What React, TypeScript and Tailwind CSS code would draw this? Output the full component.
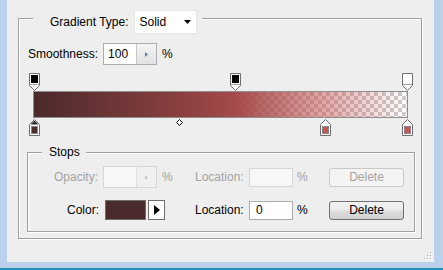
import React from 'react';

type OpacityStopData = { at: number; fill: string };
type ColorStopData = { at: number; color: string; selected?: boolean };

const opacityStops: OpacityStopData[] = [
  { at: 0, fill: '#000000' },
  { at: 54, fill: '#000000' },
  { at: 100, fill: '#ffffff' },
];

const colorStops: ColorStopData[] = [
  { at: 0, color: '#4b2a2b', selected: true },
  { at: 78, color: '#c95353' },
  { at: 100, color: '#c95353' },
];

// bar inner width in px per percent
const SCALE = 3.73;
const stopLeft = (at: number) => Math.round(at * SCALE) - 4;

function OpacityStop({ fill }: { fill: string }) {
  return (
    <svg width="11" height="18" viewBox="0 0 11 18">
      <path d="M0.5 0.5H10.5V12.5L5.5 17.5L0.5 12.5Z" fill="#ffffff" stroke="#6f6f6f" />
      <rect x="2" y="2" width="7" height="8" fill={fill} />
      <path d="M1 11.5H10" stroke="#a8a8a8" />
    </svg>
  );
}

function ColorStop({ color, selected }: { color: string; selected?: boolean }) {
  return (
    <svg width="11" height="17" viewBox="0 0 11 17">
      <path d="M5.5 0.5L10.5 5.5V16.5H0.5V5.5Z" fill="#ffffff" stroke="#6f6f6f" />
      {selected && <path d="M5.5 1.5L9.5 5.5H1.5Z" fill="#2e2e2e" />}
      <rect x="2.5" y="7.5" width="6" height="7" fill={color} stroke="#8a8a8a" />
    </svg>
  );
}

function SpinInput({ value, disabled }: { value?: string; disabled?: boolean }) {
  return (
    <div
      className={`flex w-[54px] h-[22px] border ${
        disabled ? 'border-[#d5d5d5] bg-[#f7f7f7]' : 'border-[#abadb3] bg-white'
      }`}
    >
      <div className="w-[32px] pl-[4px] leading-[20px]">{value}</div>
      <div
        className={`flex-1 flex items-center justify-center border-l ${
          disabled
            ? 'border-[#dedede] bg-[#f0f0f0]'
            : 'border-[#c6c6c6] bg-[linear-gradient(#f4f4f4,#e2e2e2)]'
        }`}
      >
        <svg width="3" height="5" viewBox="0 0 3 5">
          <path d="M0 0L3 2.5L0 5Z" fill={disabled ? '#c4c4c4' : '#5b7ea8'} />
        </svg>
      </div>
    </div>
  );
}

function DeleteButton({ disabled }: { disabled?: boolean }) {
  return (
    <div
      className={`w-[75px] h-[19px] rounded-[3px] border flex items-center justify-center leading-none ${
        disabled
          ? 'border-[#c9c9c9] bg-[#f4f4f4] text-[#a3a3a3]'
          : 'border-[#707070] bg-[linear-gradient(#f2f2f2,#ebebeb_45%,#dddddd_55%,#cfcfcf)]'
      }`}
    >
      Delete
    </div>
  );
}

function LocationField({ value, disabled }: { value?: string; disabled?: boolean }) {
  return (
    <>
      <span className={`w-[49px] ${disabled ? 'text-[#a3a3a3]' : ''}`}>Location:</span>
      <div
        className={`ml-[5px] w-[44px] h-[19px] border pl-[6px] leading-[17px] ${
          disabled ? 'border-[#d5d5d5] bg-[#f7f7f7]' : 'border-[#abadb3] bg-white'
        }`}
      >
        {value}
      </div>
      <span className={`ml-[4px] w-[32px] ${disabled ? 'text-[#a3a3a3]' : ''}`}>%</span>
      <DeleteButton disabled={disabled} />
    </>
  );
}

function GradientBar() {
  return (
    <div className="ml-[14px] mt-[8px] w-[375px]">
      {/* Opacity stops */}
      <div className="relative h-[18px]">
        {opacityStops.map((s) => (
          <div key={s.at} className="absolute top-0 flex" style={{ left: stopLeft(s.at) }}>
            <OpacityStop fill={s.fill} />
          </div>
        ))}
      </div>

      {/* Bar */}
      <div className="h-[27px] border border-[#8e8e8e] bg-[conic-gradient(#cccccc_25%,#ffffff_0_50%,#cccccc_0_75%,#ffffff_0)] bg-[length:8px_8px]">
        <div className="h-full w-full bg-[linear-gradient(to_right,#4b2a2b_0%,#8a3f40_39%,#a54a4b_54%,rgba(201,83,83,0.5)_78%,rgba(201,83,83,0)_100%)]" />
      </div>

      {/* Color stops */}
      <div className="relative h-[18px]">
        {colorStops.map((s) => (
          <div key={s.at} className="absolute top-[1px] flex" style={{ left: stopLeft(s.at) }}>
            <ColorStop color={s.color} selected={s.selected} />
          </div>
        ))}
        <div className="absolute top-[1px] left-[143px] flex">
          <svg width="7" height="7" viewBox="0 0 7 7">
            <path d="M3.5 0.5L6.5 3.5L3.5 6.5L0.5 3.5Z" fill="#ffffff" stroke="#000000" />
          </svg>
        </div>
      </div>
    </div>
  );
}

function StopsGroup() {
  return (
    <div className="ml-[8px] mt-[16px] w-[388px] h-[80px] flex flex-col items-start border border-[#a0a0a0] shadow-[1px_1px_0_#ffffff,inset_1px_1px_0_#ffffff]">
      <div className="-mt-[8px] ml-[14px] h-[14px] leading-[14px] pl-[7px] pr-[6px] bg-[#eeeeee]">Stops</div>

      <div className="mt-[7px] h-[22px] flex items-center">
        <span className="w-[70px] text-right text-[#a3a3a3]">Opacity:</span>
        <div className="ml-[5px]">
          <SpinInput disabled />
        </div>
        <span className="ml-[5px] w-[33px] text-[#a3a3a3]">%</span>
        <LocationField disabled />
      </div>

      <div className="mt-[12px] h-[20px] flex items-center">
        <span className="w-[71px] text-right">Color:</span>
        <div className="ml-[6px] w-[41px] h-[20px] border border-[#6f6f6f] bg-[#4b2a2b]" />
        <div className="ml-[2px] w-[17px] h-[20px] border border-[#6f6f6f] bg-white flex items-center justify-center">
          <svg width="6" height="10" viewBox="0 0 6 10">
            <path d="M0 0L6 5L0 10Z" fill="#000000" />
          </svg>
        </div>
        <div className="ml-[30px] flex items-center">
          <LocationField value="0" />
        </div>
      </div>
    </div>
  );
}

function GradientGroup() {
  return (
    <div className="w-[404px] h-[221px] flex flex-col items-start border border-[#a0a0a0] shadow-[1px_1px_0_#ffffff,inset_1px_1px_0_#ffffff]">
      {/* Group header */}
      <div className="-mt-[9px] ml-[14px] h-[24px] flex items-center bg-[#eeeeee] pl-[17px] pr-[5px]">
        <span>Gradient Type:</span>
        <div className="ml-[5px] w-[63px] h-[24px] bg-white border border-[#e6e6e6] flex items-center justify-between pl-[5px] pr-[5px]">
          <span>Solid</span>
          <svg width="7" height="4" viewBox="0 0 7 4">
            <path d="M0 0H7L3.5 4Z" fill="#000000" />
          </svg>
        </div>
      </div>

      {/* Smoothness */}
      <div className="mt-[9px] ml-[9px] h-[22px] flex items-center">
        <span>Smoothness:</span>
        <div className="ml-[5px]">
          <SpinInput value="100" />
        </div>
        <span className="ml-[5px]">%</span>
      </div>

      <GradientBar />
      <StopsGroup />
    </div>
  );
}

function ResizeGrip() {
  const dots = [
    [7, 1],
    [4, 4],
    [7, 4],
    [1, 7],
    [4, 7],
    [7, 7],
  ];
  return (
    <div className="absolute right-[1px] bottom-[1px] flex">
      <svg width="10" height="10" viewBox="0 0 10 10">
        {dots.map(([x, y]) => (
          <g key={`${x}-${y}`}>
            <rect x={x + 1} y={y + 1} width="1" height="1" fill="#ffffff" />
            <rect x={x} y={y} width="1" height="1" fill="#a9a9a9" />
          </g>
        ))}
      </svg>
    </div>
  );
}

export default function App() {
  return (
    <div className="w-[443px] h-[270px] flex flex-col bg-[#eeeeee] font-['Liberation_Sans',Arial,sans-serif] text-[12px] text-black overflow-hidden select-none">
      <div className="flex flex-1 min-h-0">
        <div className="w-[7px] bg-[#b9d1ea]" />
        <div className="relative flex-1 pt-[18px] pl-[11px]">
          <GradientGroup />
          <ResizeGrip />
        </div>
        <div className="w-[9px] bg-[#b9d1ea]" />
      </div>
      <div className="h-[6px] bg-[#b9d1ea]" />
      <div className="h-[2px] bg-[#1d8fb3]" />
    </div>
  );
}
